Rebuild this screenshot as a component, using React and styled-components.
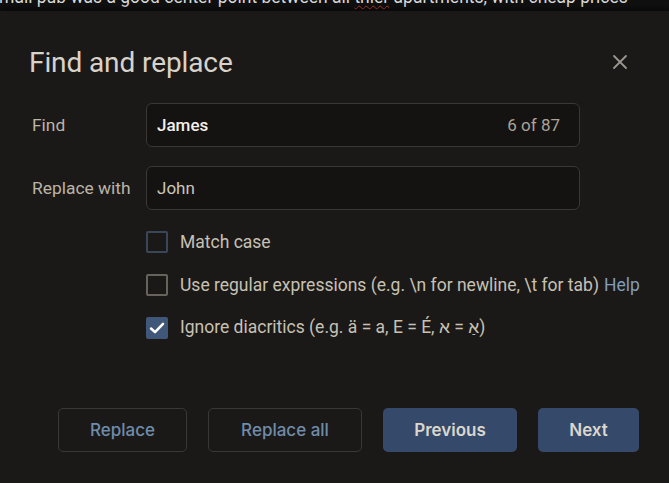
import React, { useState } from "react";
import styled, { createGlobalStyle } from "styled-components";

const GlobalStyle = createGlobalStyle({
  "html, body": {
    margin: 0,
    padding: 0,
    background: "#101010",
    fontFamily: "Roboto, 'Liberation Sans', sans-serif",
  },
  "*": { boxSizing: "border-box" },
});

const Page = styled.div({
  width: "669px",
  height: "483px",
  overflow: "hidden",
  display: "flex",
  flexDirection: "column",
  background: "#101010",
});

const DocStrip = styled.div({
  height: "11px",
  overflow: "hidden",
  flexShrink: 0,
  p: {
    margin: "-15px 0 0 -10px",
    whiteSpace: "nowrap",
    fontSize: "17.5px",
    lineHeight: "24px",
    color: "#d9d9d9",
  },
  ".typo": {
    textDecoration: "underline wavy #c0392b",
    textDecorationThickness: "1px",
    textUnderlineOffset: "2px",
  },
});

const Dialog = styled.div({
  flex: 1,
  background: "#1b1917",
  boxShadow: "0 -2px 6px rgba(0,0,0,0.6)",
  display: "flex",
  flexDirection: "column",
  paddingTop: "34px",
});

const Header = styled.div({
  display: "flex",
  alignItems: "center",
  justifyContent: "space-between",
  padding: "0 38px 0 29px",
  height: "34px",
  h1: {
    margin: 0,
    fontWeight: 400,
    fontSize: "28px",
    color: "#d8d3ca",
    letterSpacing: "-0.1px",
  },
});

const CloseButton = styled.button({
  background: "none",
  border: "none",
  padding: "2px",
  display: "flex",
  cursor: "pointer",
});

const Form = styled.div({
  display: "grid",
  gridTemplateColumns: "114px 434px",
  rowGap: "19px",
  padding: "24px 0 0 32px",
  alignItems: "center",
});

const Label = styled.label({
  fontSize: "17.4px",
  color: "#bbb4a8",
});

const Field = styled.div({
  height: "44px",
  border: "1px solid #3a3835",
  borderRadius: "6px",
  background: "#151312",
  display: "flex",
  alignItems: "center",
  justifyContent: "space-between",
  padding: "0 19px 0 10px",
  fontSize: "17px",
  color: ({ $bright }) => ($bright ? "#f2f0ec" : "#cbc5ba"),
  fontWeight: ({ $bright }) => ($bright ? 500 : 400),
});

const Count = styled.span({
  fontSize: "17px",
  fontWeight: 400,
  color: "#aaa398",
});

const Options = styled.div({
  display: "flex",
  flexDirection: "column",
  padding: "10px 0 0 146px",
});

const OptionRow = styled.label({
  height: "43px",
  display: "flex",
  alignItems: "center",
  gap: "12px",
  fontSize: "17.5px",
  color: "#c7c1b5",
  cursor: "pointer",
  whiteSpace: "nowrap",
});

const Box = styled.span({
  width: "22px",
  height: "22px",
  borderRadius: "2px",
  flexShrink: 0,
  display: "flex",
  alignItems: "center",
  justifyContent: "center",
  border: ({ $checked, $tone }) =>
    $checked ? "none" : `2px solid ${$tone === "blue" ? "#394759" : "#67625b"}`,
  background: ({ $checked }) => ($checked ? "#3f5778" : "transparent"),
});

const HelpLink = styled.a({
  color: "#7f9dbb",
  marginLeft: "5px",
  textDecoration: "none",
});

const Actions = styled.div({
  display: "flex",
  gap: "21px",
  padding: "59px 0 0 58px",
});

const Button = styled.button({
  height: "44px",
  width: ({ $w }) => `${$w}px`,
  borderRadius: "5px",
  fontFamily: "Inter, 'Noto Sans', sans-serif",
  fontSize: "17px",
  cursor: "pointer",
  border: ({ $primary }) => ($primary ? "none" : "1px solid #3a3835"),
  background: ({ $primary }) => ($primary ? "#354a6b" : "transparent"),
  color: ({ $primary }) => ($primary ? "#dcd7cc" : "#6f8cab"),
  fontWeight: ({ $primary }) => ($primary ? 600 : 500),
});

function Check({ checked, tone, children, onToggle }) {
  return (
    <OptionRow onClick={onToggle}>
      <Box $checked={checked} $tone={tone}>
        {checked && (
          <svg width="18" height="18" viewBox="0 0 18 18">
            <path
              d="M3 9.5 L7 13.2 L15 4.8"
              fill="none"
              stroke="#ffffff"
              strokeWidth="2.5"
              strokeLinecap="round"
              strokeLinejoin="round"
            />
          </svg>
        )}
      </Box>
      <span>{children}</span>
    </OptionRow>
  );
}

export default function App() {
  const [opts, setOpts] = useState({ match: false, regex: false, diacritics: true });
  const toggle = (k) => setOpts((o) => ({ ...o, [k]: !o[k] }));

  return (
    <Page>
      <GlobalStyle />
      <DocStrip>
        <p>
          small pub was a good center point between all <span className="typo">thier</span>{" "}
          apartments, with cheap prices
        </p>
      </DocStrip>
      <Dialog>
        <Header>
          <h1>Find and replace</h1>
          <CloseButton aria-label="Close">
            <svg width="18" height="18" viewBox="0 0 18 18">
              <path d="M3 3 L15 15 M15 3 L3 15" stroke="#9b968f" strokeWidth="1.8" strokeLinecap="round" />
            </svg>
          </CloseButton>
        </Header>
        <Form>
          <Label>Find</Label>
          <Field $bright>
            <span>James</span>
            <Count>6 of 87</Count>
          </Field>
          <Label>Replace with</Label>
          <Field>
            <span>John</span>
          </Field>
        </Form>
        <Options>
          <Check checked={opts.match} tone="blue" onToggle={() => toggle("match")}>
            Match case
          </Check>
          <Check checked={opts.regex} onToggle={() => toggle("regex")}>
            Use regular expressions (e.g. \n for newline, \t for tab)
            <HelpLink href="#">Help</HelpLink>
          </Check>
          <Check checked={opts.diacritics} onToggle={() => toggle("diacritics")}>
            Ignore diacritics (e.g. ä = a, E = É, <bdi>א</bdi> = <bdi>אַ</bdi>)
          </Check>
        </Options>
        <Actions>
          <Button $w={129}>Replace</Button>
          <Button $w={154}>Replace all</Button>
          <Button $w={134} $primary>Previous</Button>
          <Button $w={101} $primary>Next</Button>
        </Actions>
      </Dialog>
    </Page>
  );
}
